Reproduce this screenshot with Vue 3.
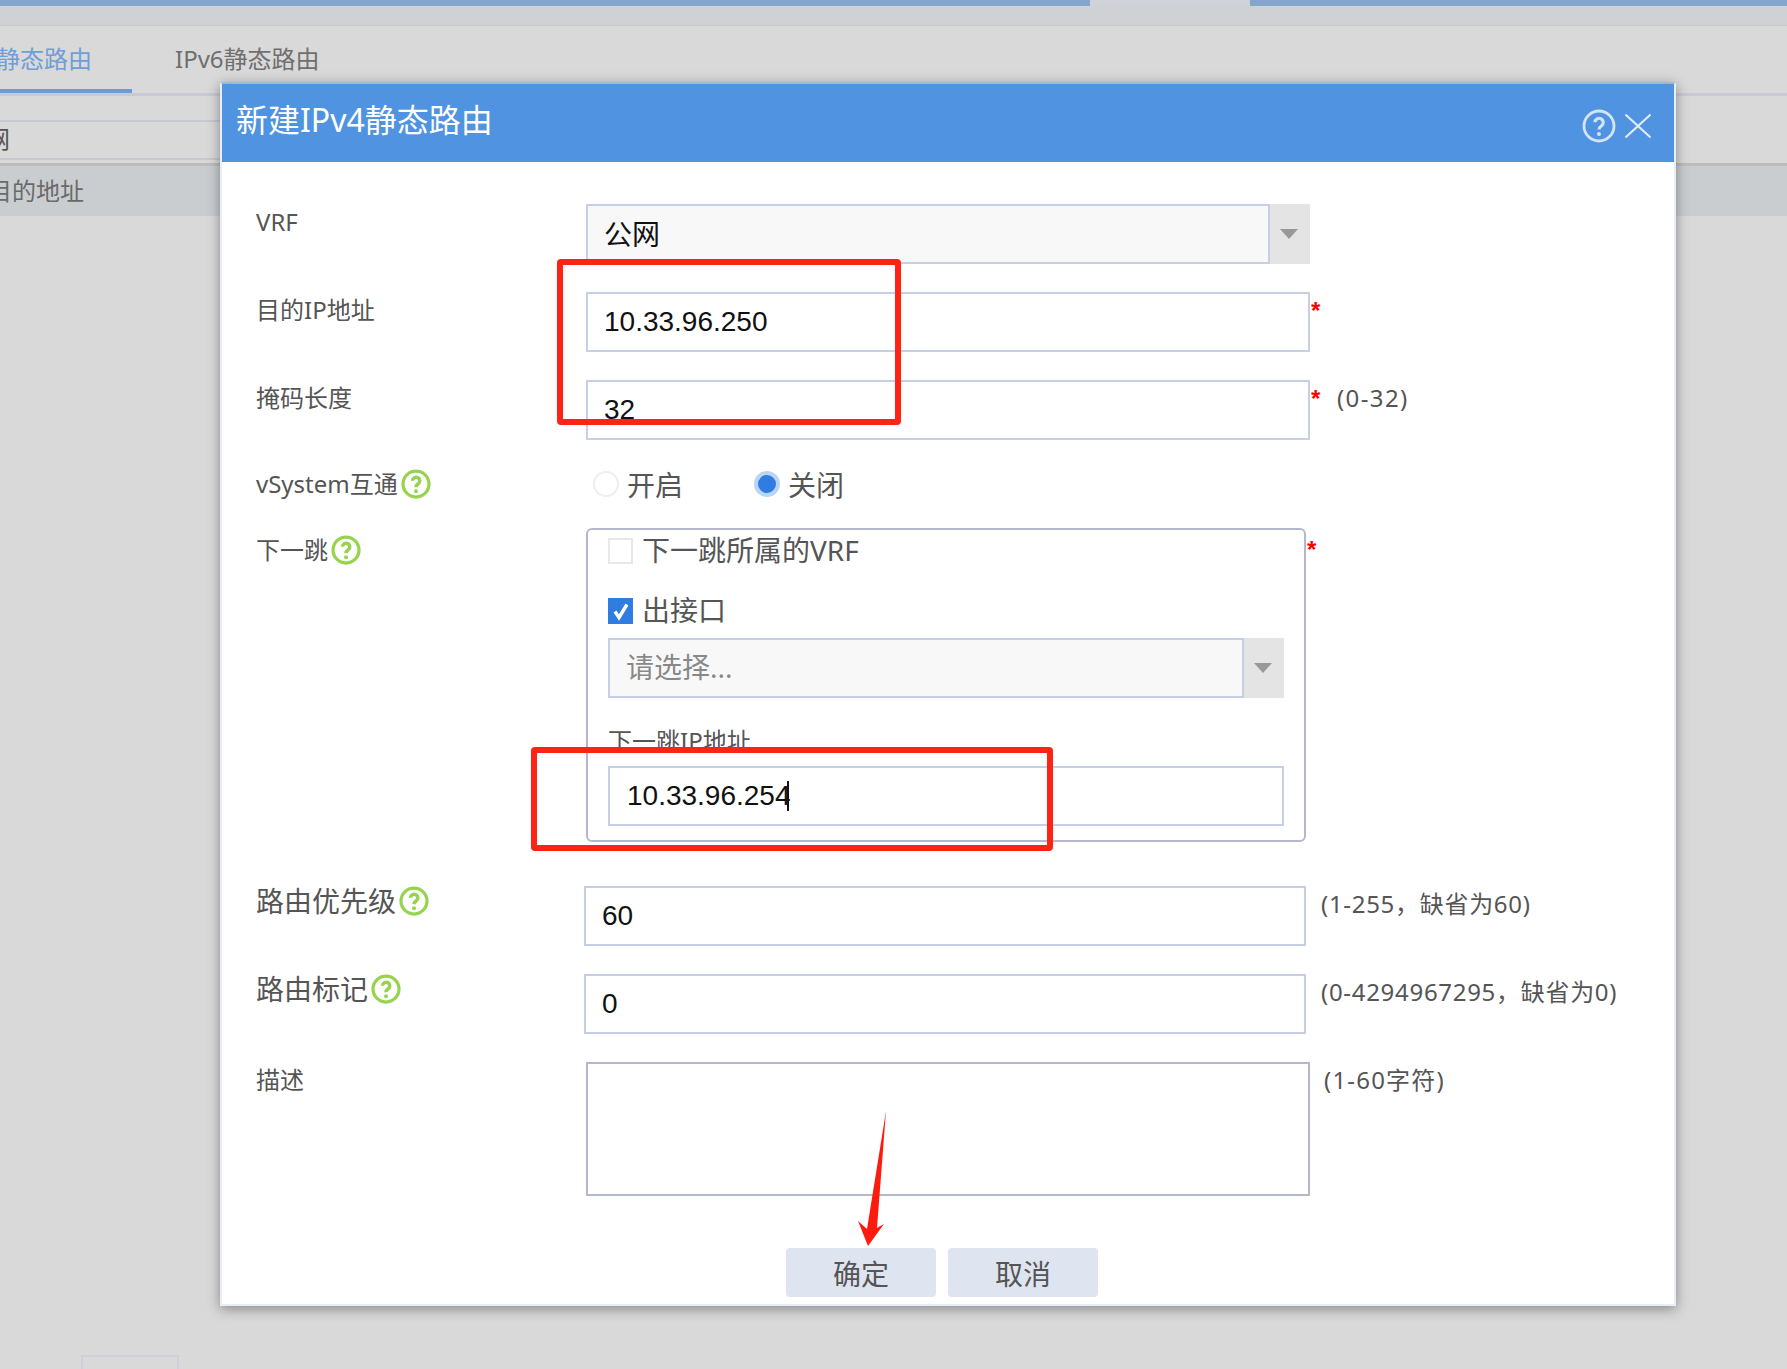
<script setup>
const helpPath = 'M9.2 9.4a2.9 2.9 0 1 1 4.6 2.4c-1.1.8-1.8 1.3-1.8 2.7'
</script>

<template>
  <div class="page">
    <div class="topbar">
      <div class="topbar-blue left"></div>
      <div class="topbar-gap"></div>
      <div class="topbar-blue grow"></div>
    </div>
    <div class="subbar"></div>
    <div class="tabs">
      <div class="tab active"><span>IPv4静态路由</span></div>
      <div class="tab">IPv6静态路由</div>
    </div>
    <div class="filter-wrap">
      <div class="filter"><span>公网</span></div>
    </div>
    <div class="thead"><span>目的地址</span></div>
    <div class="pager"></div>

    <div class="dialog">
      <div class="dialog-head">
        <h1>新建IPv4静态路由</h1>
        <div class="head-icons">
          <svg class="head-help" viewBox="0 0 24 24" width="34" height="34">
            <circle cx="12" cy="12" r="10.6" fill="none" stroke="#d3e4f8" stroke-width="2" />
            <path :d="helpPath" fill="none" stroke="#d3e4f8" stroke-width="2.2" />
            <circle cx="12" cy="17.6" r="1.4" fill="#d3e4f8" />
          </svg>
          <svg viewBox="0 0 26 24" width="26" height="24">
            <path d="M0.5 0.5 25.5 23.5M25.5 0.5 0.5 23.5" fill="none" stroke="#e4eefa" stroke-width="2" />
          </svg>
        </div>
      </div>

      <div class="form">
        <div class="row">
          <div class="label">VRF</div>
          <div class="select">
            <div class="select-value">公网</div>
            <div class="select-btn"><i class="tri"></i></div>
          </div>
        </div>
        <div class="row">
          <div class="label">目的IP地址</div>
          <div class="field">10.33.96.250</div>
          <span class="star">*</span>
        </div>
        <div class="row">
          <div class="label">掩码长度</div>
          <div class="field">32</div>
          <span class="star">*</span>
          <span class="hint mask-hint">(0-32)</span>
        </div>
        <div class="row radio-row">
          <div class="label">
            <span>vSystem互通</span>
            <svg class="q" viewBox="0 0 24 24" width="30" height="30">
              <circle cx="12" cy="12" r="10.4" fill="#fff" stroke="#97d34f" stroke-width="2.6" />
              <path :d="helpPath" fill="none" stroke="#97d34f" stroke-width="2.8" />
              <circle cx="12" cy="17.8" r="1.6" fill="#97d34f" />
            </svg>
          </div>
          <div class="radio first"><i class="dot"></i>开启</div>
          <div class="radio second"><i class="dot on"></i>关闭</div>
        </div>
        <div class="row hop-row">
          <div class="label hop-title">
            <span>下一跳</span>
            <svg class="q" viewBox="0 0 24 24" width="30" height="30">
              <circle cx="12" cy="12" r="10.4" fill="#fff" stroke="#97d34f" stroke-width="2.6" />
              <path :d="helpPath" fill="none" stroke="#97d34f" stroke-width="2.8" />
              <circle cx="12" cy="17.8" r="1.6" fill="#97d34f" />
            </svg>
          </div>
          <div class="hop">
            <div class="check first-check"><i class="box"></i><span>下一跳所属的VRF</span></div>
            <div class="check">
              <i class="box on">
                <svg viewBox="0 0 26 26" width="26" height="26">
                  <path d="M7 13.5 11 19.5 19 6.5" fill="none" stroke="#fff" stroke-width="3.4" />
                </svg>
              </i><span>出接口</span>
            </div>
            <div class="select inner-select">
              <div class="select-value placeholder">请选择...</div>
              <div class="select-btn"><i class="tri"></i></div>
            </div>
            <div class="hop-label">下一跳IP地址</div>
            <div class="field hop-field">10.33.96.254<i class="caret"></i></div>
          </div>
          <span class="star hop-star">*</span>
        </div>
        <div class="row wide">
          <div class="label big">
            <span>路由优先级</span>
            <svg class="q" viewBox="0 0 24 24" width="30" height="30">
              <circle cx="12" cy="12" r="10.4" fill="#fff" stroke="#97d34f" stroke-width="2.6" />
              <path :d="helpPath" fill="none" stroke="#97d34f" stroke-width="2.8" />
              <circle cx="12" cy="17.8" r="1.6" fill="#97d34f" />
            </svg>
          </div>
          <div class="field">60</div>
          <span class="hint wide-hint">(1-255，缺省为60)</span>
        </div>
        <div class="row wide">
          <div class="label big">
            <span>路由标记</span>
            <svg class="q" viewBox="0 0 24 24" width="30" height="30">
              <circle cx="12" cy="12" r="10.4" fill="#fff" stroke="#97d34f" stroke-width="2.6" />
              <path :d="helpPath" fill="none" stroke="#97d34f" stroke-width="2.8" />
              <circle cx="12" cy="17.8" r="1.6" fill="#97d34f" />
            </svg>
          </div>
          <div class="field">0</div>
          <span class="hint wide-hint">(0-4294967295，缺省为0)</span>
        </div>
        <div class="row desc-row">
          <div class="label">描述</div>
          <div class="textarea"></div>
          <span class="hint desc-hint">(1-60字符)</span>
        </div>
        <div class="actions">
          <button class="btn" type="button">确定</button>
          <button class="btn" type="button">取消</button>
        </div>
      </div>
    </div>

    <div class="mark mark-a"></div>
    <div class="mark mark-b"></div>
    <svg class="arrow" viewBox="0 0 34 138" width="34" height="138">
      <polygon points="29,1 20,118 27,114 11,136 1,111 10,119" fill="#ff1a10" />
    </svg>
  </div>
</template>

<style>
html, body { margin: 0; background: #d9d9d9; }
</style>

<style scoped>
.page {
  --ui: "Noto Sans", "Noto Sans CJK SC", sans-serif;
  --val: "Liberation Sans", "Noto Sans CJK SC", sans-serif;
  position: relative;
  width: 1787px;
  height: 1369px;
  overflow: hidden;
  background: #d9d9d9;
  font-family: var(--ui);
  color: #666;
}
.topbar { display: flex; height: 6px; }
.topbar-blue { background: #84a5cc; }
.left { width: 1090px; }
.grow { flex: 1; }
.topbar-gap { width: 160px; background: #cfd2d8; }
.subbar { height: 20px; background: #d0d1d4; border-bottom: 1px solid #c9c9cb; box-sizing: border-box; }
.tabs {
  display: flex;
  height: 67px;
  border-bottom: 3px solid #c8cad6;
  font-size: 24px;
  color: #6f6f6f;
}
.tab {
  display: flex;
  align-items: center;
  margin-left: 43px;
  white-space: nowrap;
  height: 67px;
  box-sizing: border-box;
  padding-bottom: 4px;
}
.tab.active {
  width: 132px;
  margin-left: 0;
  justify-content: flex-end;
  padding-right: 40px;
  padding-bottom: 0;
  color: #6f9ed8;
  border-bottom: 4px solid #6a9bd6;
}
.filter-wrap { padding-top: 24px; height: 40px; }
.filter {
  width: 220px;
  height: 40px;
  box-sizing: border-box;
  border-top: 2px solid #c6c8d2;
  border-bottom: 2px solid #c6c8d2;
  font-size: 24px;
  line-height: 34px;
  white-space: nowrap;
  overflow: hidden;
  display: flex;
  justify-content: flex-end;
}
.filter span { margin-right: 210px; color: #555; }
.thead {
  margin-top: 3px;
  height: 50px;
  box-sizing: content-box;
  background: #cacdd0;
  border-top: 3px solid #bdbdbf;
  display: flex;
  align-items: center;
  justify-content: flex-end;
  font-size: 24px;
  color: #6a6a6a;
  overflow: hidden;
  white-space: nowrap;
}
.thead span { margin-right: 1703px; margin-bottom: 4px; }
.pager {
  margin: 1139px 0 0 81px;
  width: 98px;
  height: 20px;
  border: 2px solid #d0d0d8;
  box-sizing: border-box;
}

.dialog {
  position: absolute;
  left: 220px;
  top: 82px;
  width: 1456px;
  height: 1224px;
  box-sizing: border-box;
  background: #fff;
  border: 2px solid #e9edf8;
  border-top-color: #a6b6cb;
  box-shadow: 0 3px 12px rgba(0, 0, 0, 0.38);
  font-size: 24px;
  color: #555;
}
.dialog-head {
  height: 78px;
  background: #5093e0;
  display: flex;
  align-items: center;
  justify-content: space-between;
  padding: 0 23px 0 14px;
}
.dialog-head h1 {
  margin: 0 0 6px;
  font-size: 32px;
  line-height: 44px;
  font-weight: 400;
  color: #fff;
}
.head-icons { display: flex; align-items: center; gap: 9px; margin-top: 6px; }

.form { padding: 42px 0 0 34px; }
.row { display: flex; align-items: flex-start; margin-bottom: 28px; }
.label {
  width: 330px;
  flex: none;
  display: flex;
  align-items: center;
  line-height: 36px;
  height: 36px;
  font-size: 24px;
  white-space: nowrap;
}
.hop-title { padding-top: 4px; }
.label.big { font-size: 28px; width: 328px; height: 30px; line-height: 30px; }
.q { margin-left: 3px; flex: none; }
.field {
  width: 724px;
  height: 60px;
  box-sizing: border-box;
  border: 2px solid #c5d0e4;
  padding-left: 16px;
  font-family: var(--val);
  font-size: 28px;
  line-height: 56px;
  color: #111;
  background: #fff;
  flex: none;
  position: relative;
}
.select { display: flex; width: 724px; height: 60px; flex: none; }
.select-value {
  flex: 1;
  box-sizing: border-box;
  background: #f8f8f8;
  border: 2px solid #c5d0e4;
  padding-left: 16px;
  font-family: var(--val);
  font-size: 28px;
  line-height: 60px;
  color: #111;
}
.select-btn {
  width: 40px;
  box-sizing: border-box;
  padding-right: 3px;
  background: #e4e4e4;
  display: flex;
  align-items: center;
  justify-content: center;
}
.tri {
  width: 0;
  height: 0;
  border-left: 9px solid transparent;
  border-right: 9px solid transparent;
  border-top: 10px solid #999;
}
.star {
  font-family: "Liberation Sans", sans-serif;
  font-weight: 700;
  font-size: 24px;
  line-height: 24px;
  color: #f00;
  margin: 7px 0 0 1px;
  width: 13px;
  flex: none;
}
.hop-star { margin-top: 10px; }
.hint { line-height: 36px; white-space: nowrap; color: #555; letter-spacing: 0.7px; }
.mask-hint { margin-left: 13px; letter-spacing: 1.4px; }
.wide-hint { margin-left: 15px; }
.desc-hint { margin-left: 14px; letter-spacing: 1.2px; }

.radio-row { height: 32px; align-items: center; }
.radio { display: flex; align-items: center; font-size: 28px; }
.first { margin-left: 7px; width: 161px; }
.dot {
  width: 26px;
  height: 26px;
  box-sizing: border-box;
  border-radius: 50%;
  border: 2px solid #eee;
  margin-right: 8px;
  flex: none;
}
.dot.on {
  border: 4px solid #b9d5f6;
  background: #2f7de0;
}
.hop-row { margin-bottom: 44px; }
.hop {
  width: 720px;
  height: 314px;
  box-sizing: border-box;
  border: 2px solid #b5b8cc;
  border-radius: 6px;
  padding: 8px 20px 0;
  flex: none;
}
.check { display: flex; align-items: center; height: 26px; font-size: 28px; margin-top: 34px; }
.check span { margin-bottom: 4px; }
.first-check { margin-top: 0; }
.box {
  width: 25px;
  height: 26px;
  box-sizing: border-box;
  border: 2px solid #e8e8e8;
  margin-right: 9px;
  flex: none;
}
.box.on { border: 0; background: #2f7de0; }
.box svg { display: block; }
.inner-select { width: 676px; margin-top: 14px; height: 60px; }
.placeholder { color: #888; font-family: var(--ui); line-height: 54px; }
.hop-label { margin-top: 26px; line-height: 34px; white-space: nowrap; height: 42px; color: #555; }
.hop-field { width: 676px; color: #111; padding-left: 17px; }
.caret {
  position: absolute;
  left: 177px;
  top: 13px;
  width: 2px;
  height: 30px;
  background: #111;
}
.wide .field { width: 722px; padding-left: 16px; }
.desc-row { margin-bottom: 52px; }
.textarea {
  width: 724px;
  height: 134px;
  box-sizing: border-box;
  border: 2px solid #b5b8cc;
  flex: none;
}
.actions { display: flex; gap: 12px; margin-left: 530px; }
.btn {
  width: 150px;
  height: 49px;
  border: 0;
  border-radius: 4px;
  background: #dfe5f0;
  font-family: var(--ui);
  font-size: 28px;
  color: #555;
  padding: 0;
}

.mark {
  position: absolute;
  box-sizing: border-box;
  border: 6px solid #ff2314;
  border-radius: 4px;
}
.mark-a { left: 557px; top: 259px; width: 344px; height: 166px; }
.mark-b { left: 531px; top: 747px; width: 522px; height: 104px; }
.arrow { position: absolute; left: 857px; top: 1110px; }
</style>
